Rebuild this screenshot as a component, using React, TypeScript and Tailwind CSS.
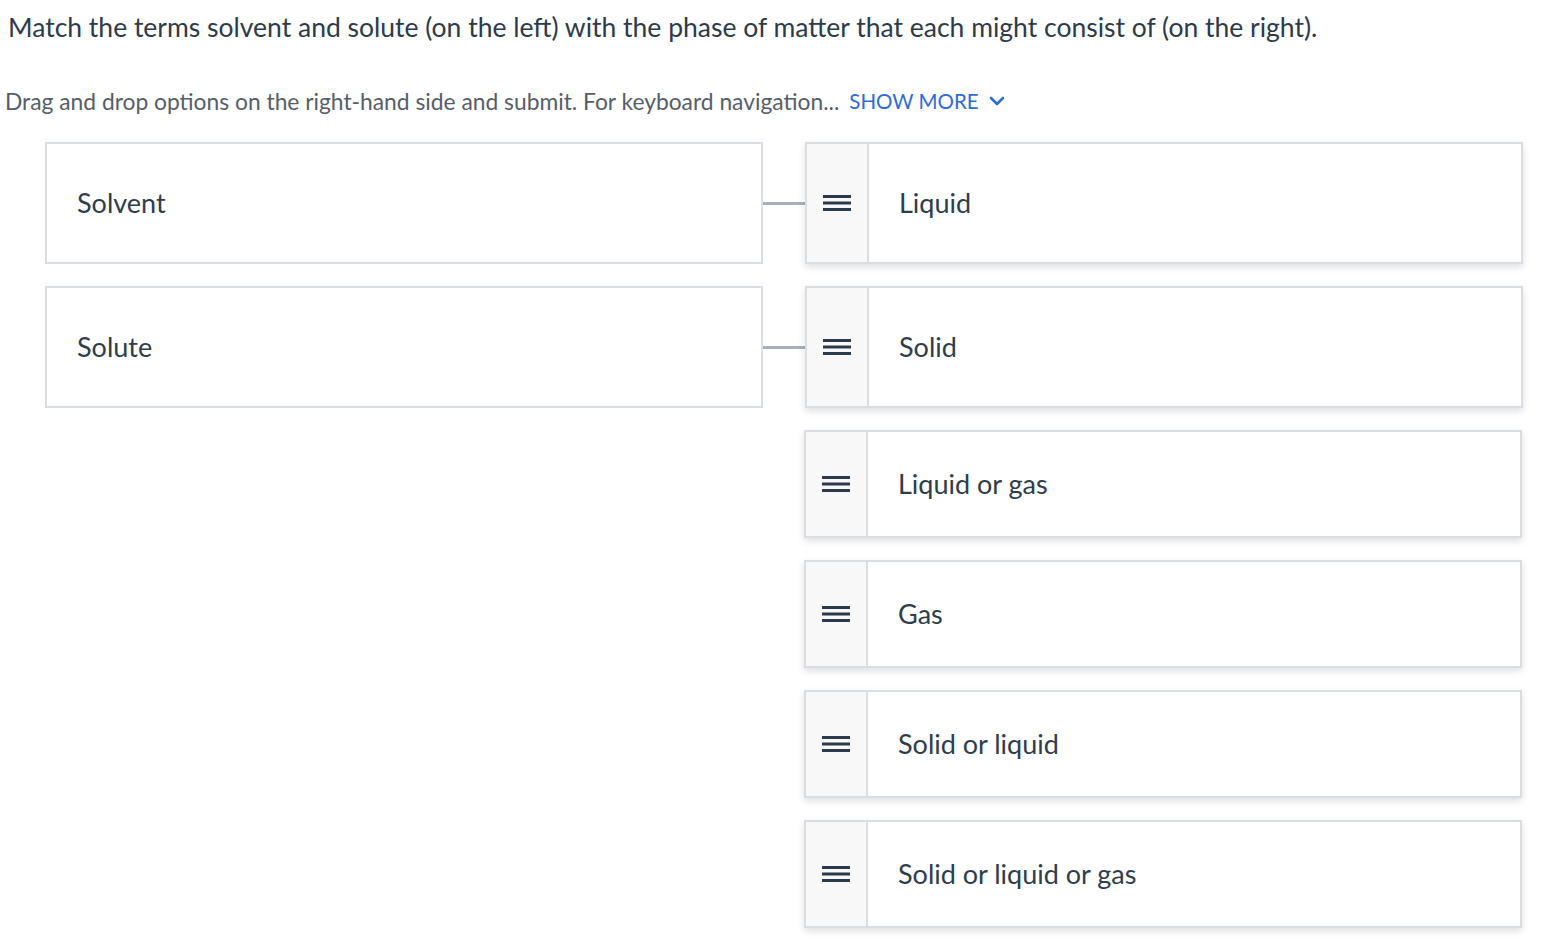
import { ChevronDown } from 'lucide-react';

const font = { fontFamily: '"Lato", "Noto Sans", sans-serif' };

const pairs = [
  { term: 'Solvent', answer: 'Liquid' },
  { term: 'Solute', answer: 'Solid' },
];

const options = ['Liquid or gas', 'Gas', 'Solid or liquid', 'Solid or liquid or gas'];

const Handle = () => (
  <div className="w-[62px] shrink-0 bg-[#f8f8f9] border-r-2 border-[#dadde1] flex items-center justify-center">
    <svg width="30" height="20" viewBox="0 0 30 20">
      <rect x="1" y="2" width="28" height="3" fill="#2c3b4b" />
      <rect x="1" y="8.5" width="28" height="3" fill="#2c3b4b" />
      <rect x="1" y="15" width="28" height="3" fill="#2c3b4b" />
    </svg>
  </div>
);

const OptionCard = ({ label, tall }: { label: string; tall?: boolean }) => (
  <div
    className={`w-[718px] shrink-0 flex bg-white border-2 border-[#dadde1] shadow-[0_3px_7px_rgba(0,0,0,0.13)] ${
      tall ? 'h-[122px]' : 'h-[108px] -ml-px'
    }`}
  >
    <Handle />
    <div className="flex items-center pl-[30px] text-[27px] text-[#2e3d4d]">{label}</div>
  </div>
);

export default function App() {
  return (
    <div className="min-h-screen bg-white text-[#2e3d4d]" style={font}>
      <h1 className="pt-[9px] pl-[8px] text-[26.5px] leading-[36px] text-[#2c3b4b] whitespace-nowrap">
        Match the terms solvent and solute (on the left) with the phase of matter that each might consist of (on the right).
      </h1>

      <p className="mt-[41px] pl-[5px] text-[22.8px] leading-[30px] text-[#555e69] flex items-center whitespace-nowrap">
        Drag and drop options on the right-hand side and submit. For keyboard navigation...
        <span className="ml-[10px] text-[20.5px] text-[#2f6bd8] flex items-center">
          SHOW MORE
          <ChevronDown className="ml-[6px] w-[24px] h-[24px]" strokeWidth={2.6} />
        </span>
      </p>

      <div className="mt-[26px] pl-[45px] flex flex-col gap-[22px] pb-[12px]">
        {pairs.map((p) => (
          <div key={p.term} className="flex items-center">
            <div className="w-[718px] h-[122px] shrink-0 border-2 border-[#dadde1] flex items-center pl-[30px] text-[27px] text-[#2e3d4d]">
              {p.term}
            </div>
            <div className="w-[42px] h-[3px] bg-[#a8b1ba] shrink-0" />
            <OptionCard label={p.answer} tall />
          </div>
        ))}
        {options.map((o) => (
          <div key={o} className="flex pl-[760px]">
            <OptionCard label={o} />
          </div>
        ))}
      </div>
    </div>
  );
}
